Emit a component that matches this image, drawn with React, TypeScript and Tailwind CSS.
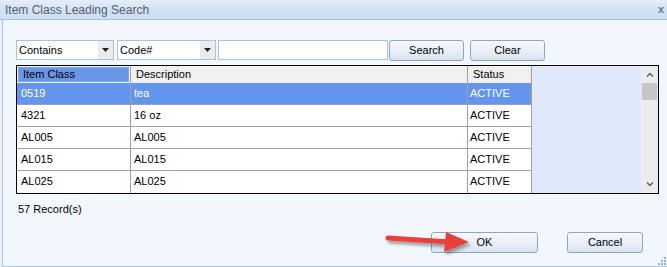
import React from "react";

const rows = [
  { code: "0519", desc: "tea", status: "ACTIVE" },
  { code: "4321", desc: "16 oz", status: "ACTIVE" },
  { code: "AL005", desc: "AL005", status: "ACTIVE" },
  { code: "AL015", desc: "AL015", status: "ACTIVE" },
  { code: "AL025", desc: "AL025", status: "ACTIVE" },
];

const ComboBox = ({ value, width }: { value: string; width: string }) => (
  <div className={`flex h-[20px] ${width} border border-[#abc1d9] bg-white`}>
    <div className="flex-1 pl-[2px] leading-[18px] text-black">{value}</div>
    <div className="flex w-[15px] items-center justify-center bg-[#ebebeb]">
      <svg width="7" height="4" viewBox="0 0 7 4">
        <polygon points="0,0 7,0 3.5,4" fill="#222" />
      </svg>
    </div>
  </div>
);

const AeroButton = ({ label, width }: { label: string; width: string }) => (
  <button
    type="button"
    className={`h-[21px] ${width} rounded-[3px] border border-[#8fa5c1] bg-gradient-to-b from-[#f7f9fd] via-[#eaf0f8] to-[#d8e3f1] text-[11px] leading-[19px] text-black`}
  >
    {label}
  </button>
);

export default function App() {
  return (
    <div
      className="relative flex h-[267px] w-[667px] flex-col overflow-hidden bg-[#e9f0f9] text-[11px] text-black"
      style={{ fontFamily: '"Liberation Sans", Arial, sans-serif' }}
    >
      {/* Title bar */}
      <div className="flex h-[20px] shrink-0 items-center justify-between border-b border-[#9dc5ea] bg-gradient-to-b from-[#e6edf7] via-[#d2e2f5] to-[#cde0f5] pl-[5px] pr-[3px]">
        <span className="text-[12px] text-[#57606c]">Item Class Leading Search</span>
        <span className="text-[11px] font-bold leading-none text-[#6c7a8e]">x</span>
      </div>

      {/* Body */}
      <div className="ml-[2px] flex flex-1 flex-col border-b border-l border-[#a9c8e7] bg-[#f2f7fd] pl-[13px] pr-[9px] pt-[20px]">
        {/* Search controls */}
        <div className="flex h-[20px] items-center">
          <ComboBox value="Contains" width="w-[98px]" />
          <div className="ml-[3px]">
            <ComboBox value="Code#" width="w-[99px]" />
          </div>
          <div className="ml-[2px] h-[20px] w-[170px] border border-[#abc1d9] bg-white" />
          <div className="ml-[1px]">
            <AeroButton label="Search" width="w-[75px]" />
          </div>
          <div className="ml-[6px]">
            <AeroButton label="Clear" width="w-[75px]" />
          </div>
        </div>

        {/* Grid */}
        <div className="mt-[5px] flex h-[129px] w-[643px] border border-black bg-white">
          <div className="flex w-[515px] flex-col">
            <div className="flex h-[17px] bg-[#f0f0f0]">
              <div className="w-[114px] border-r border-[#a0a0a0] p-[1px]">
                <div className="h-full border border-[#7fa6ea] bg-[#6897ea] pl-[4px] leading-[13px] text-black">
                  Item Class
                </div>
              </div>
              <div className="w-[337px] border-r border-[#a0a0a0] pl-[5px] leading-[17px]">Description</div>
              <div className="w-[64px] border-r border-[#a0a0a0] pl-[5px] leading-[17px]">Status</div>
            </div>
            {rows.map((r, i) => (
              <div
                key={r.code}
                className={`flex h-[22px] border-b border-[#a0a0a0] leading-[21px] last:border-b-0 ${
                  i === 0 ? "bg-[#6495ed] text-white" : "bg-white text-black"
                }`}
              >
                <div className="w-[114px] border-r border-[#a0a0a0] pl-[4px]">{r.code}</div>
                <div className="w-[337px] border-r border-[#a0a0a0] pl-[3px]">{r.desc}</div>
                <div className="w-[64px] border-r border-[#a0a0a0] pl-[2px]">{r.status}</div>
              </div>
            ))}
          </div>
          <div className="w-[109px] bg-[#dfe9fb]" />
          {/* Scrollbar */}
          <div className="flex w-[17px] flex-col bg-[#ececec]">
            <div className="flex h-[17px] items-center justify-center">
              <svg width="8" height="5" viewBox="0 0 8 5">
                <polyline points="1,4.5 4,1.5 7,4.5" fill="none" stroke="#606060" strokeWidth="1.5" />
              </svg>
            </div>
            <div className="mx-[1px] h-[17px] bg-[#c6c6c6]" />
            <div className="flex-1" />
            <div className="flex h-[17px] items-center justify-center">
              <svg width="8" height="5" viewBox="0 0 8 5">
                <polyline points="1,0.5 4,3.5 7,0.5" fill="none" stroke="#606060" strokeWidth="1.5" />
              </svg>
            </div>
          </div>
        </div>

        <div className="mt-[8px] pl-[2px] leading-[14px]">57 Record(s)</div>

        <div className="mt-[16px] flex justify-end gap-[29px] pr-[15px]">
          <AeroButton label="OK" width="w-[107px]" />
          <AeroButton label="Cancel" width="w-[76px]" />
        </div>
      </div>

      {/* Resize grip */}
      <svg className="absolute bottom-[2px] right-[1px]" width="9" height="9" viewBox="0 0 9 9">
        {[
          [7, 1],
          [4, 4],
          [7, 4],
          [1, 7],
          [4, 7],
          [7, 7],
        ].map(([x, y]) => (
          <rect key={`${x}-${y}`} x={x} y={y} width="2" height="2" fill="#8fb3d9" />
        ))}
      </svg>

      {/* Annotation arrow */}
      <svg className="pointer-events-none absolute left-0 top-0" width="667" height="267">
        <defs>
          <filter id="shadow" x="-20%" y="-50%" width="140%" height="200%">
            <feDropShadow dx="2" dy="3" stdDeviation="1.5" floodColor="#000" floodOpacity="0.35" />
          </filter>
        </defs>
        <g filter="url(#shadow)">
          <line x1="388" y1="238" x2="450" y2="242" stroke="#e8413b" strokeWidth="5" strokeLinecap="round" />
          <polygon points="446,232 469,242 444,252" fill="#e8413b" />
        </g>
      </svg>
    </div>
  );
}
